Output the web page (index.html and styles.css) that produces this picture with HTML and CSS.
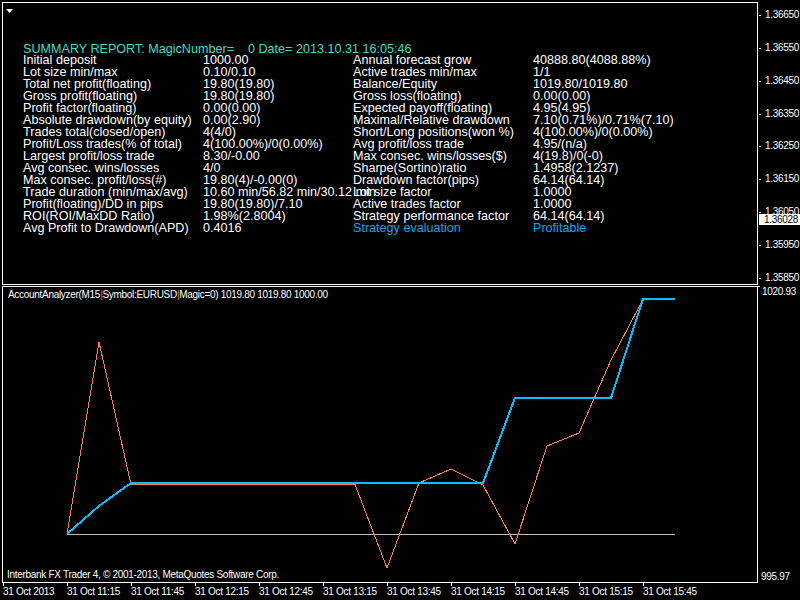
FILE: index.html
```html
<!DOCTYPE html>
<html lang="en">
<head>
  <meta charset="UTF-8" />
  <title>EURUSD,M15 - Account Analyzer</title>
  <link rel="stylesheet" href="styles.css">
</head>
<body>

<div class="terminal">

  <!-- Main chart window -->
  <div class="row row-main">
    <div class="pane pane-main">
      <svg class="menu-arrow" width="7" height="4" viewBox="0 0 7 4"><polygon points="0,0 7,0 3.5,4" fill="#fff"/></svg>
      <div class="report">
        <div class="report-title">SUMMARY REPORT: MagicNumber=    0 Date= 2013.10.31 16:05:46</div>
        <div class="report-grid">
          <span>Initial deposit</span><span>1000.00</span><span>Annual forecast grow</span><span>40888.80(4088.88%)</span>
          <span>Lot size min/max</span><span>0.10/0.10</span><span>Active trades min/max</span><span>1/1</span>
          <span>Total net profit(floating)</span><span>19.80(19.80)</span><span>Balance/Equity</span><span>1019.80/1019.80</span>
          <span>Gross profit(floating)</span><span>19.80(19.80)</span><span>Gross loss(floating)</span><span>0.00(0.00)</span>
          <span>Profit factor(floating)</span><span>0.00(0.00)</span><span>Expected payoff(floating)</span><span>4.95(4.95)</span>
          <span>Absolute drawdown(by equity)</span><span>0.00(2.90)</span><span>Maximal/Relative drawdown</span><span>7.10(0.71%)/0.71%(7.10)</span>
          <span>Trades total(closed/open)</span><span>4(4/0)</span><span>Short/Long positions(won %)</span><span>4(100.00%)/0(0.00%)</span>
          <span>Profit/Loss trades(% of total)</span><span>4(100.00%)/0(0.00%)</span><span>Avg profit/loss trade</span><span>4.95/(n/a)</span>
          <span>Largest profit/loss trade</span><span>8.30/-0.00</span><span>Max consec. wins/losses($)</span><span>4(19.8)/0(-0)</span>
          <span>Avg consec. wins/losses</span><span>4/0</span><span>Sharpe(Sortino)ratio</span><span>1.4958(2.1237)</span>
          <span>Max consec. profit/loss(#)</span><span>19.80(4)/-0.00(0)</span><span>Drawdown factor(pips)</span><span>64.14(64.14)</span>
          <span>Trade duration (min/max/avg)</span><span>10.60 min/56.82 min/30.12 min</span><span>Lot size factor</span><span>1.0000</span>
          <span>Profit(floating)/DD in pips</span><span>19.80(19.80)/7.10</span><span>Active trades factor</span><span>1.0000</span>
          <span>ROI(ROI/MaxDD Ratio)</span><span>1.98%(2.8004)</span><span>Strategy performance factor</span><span>64.14(64.14)</span>
          <span>Avg Profit to Drawdown(APD)</span><span>0.4016</span><span class="eval">Strategy evaluation</span><span class="eval">Profitable</span>
        </div>
      </div>
    </div>

    <div class="price-axis">
      <div class="price">1.36650</div>
      <div class="price">1.36550</div>
      <div class="price">1.36450</div>
      <div class="price">1.36350</div>
      <div class="price">1.36250</div>
      <div class="price">1.36150</div>
      <div class="price">1.36050</div>
      <div class="price">1.35950</div>
      <div class="price">1.35850</div>
      <div class="bid-label">1.36028</div>
    </div>
  </div>

  <!-- Indicator subwindow -->
  <div class="row row-sub">
    <div class="pane pane-sub">
      <svg class="equity-chart" width="754" height="295" viewBox="3 287 754 295">
        <line x1="67" y1="534.5" x2="675" y2="534.5" stroke="#c0c0c0" stroke-width="1"/>
        <polyline fill="none" stroke="#ff7f50" stroke-width="1" shape-rendering="crispEdges"
          points="67,534 99,342 131,484.5 355,484.5 387,568 419,483 451,469 483,485 515,544 547,446 579,433 611,360 643,299.5 675,299.5"/>
        <polyline fill="none" stroke="#00bfff" stroke-width="2" shape-rendering="crispEdges"
          points="67,534 99,506 131,483 483,483 515,398 611,398 643,299 675,299"/>
      </svg>
      <div class="sub-title">AccountAnalyzer(M15<span class="pipe">|</span>Symbol:EURUSD<span class="pipe">|</span>Magic=0) 1019.80 1019.80 1000.00</div>
      <div class="copyright">Interbank FX Trader 4, © 2001-2013, MetaQuotes Software Corp.</div>
    </div>
    <div class="sub-axis">
      <div class="sub-value top">1020.93</div>
      <div class="sub-value">995.97</div>
    </div>
  </div>

  <!-- Time scale -->
  <div class="time-axis">
    <div class="time">31 Oct 2013</div>
    <div class="time">31 Oct 11:15</div>
    <div class="time">31 Oct 11:45</div>
    <div class="time">31 Oct 12:15</div>
    <div class="time">31 Oct 12:45</div>
    <div class="time">31 Oct 13:15</div>
    <div class="time">31 Oct 13:45</div>
    <div class="time">31 Oct 14:15</div>
    <div class="time">31 Oct 14:45</div>
    <div class="time">31 Oct 15:15</div>
    <div class="time">31 Oct 15:45</div>
  </div>

</div>

</body>
</html>
```

FILE: styles.css
```css
html, body {
  margin: 0;
  padding: 0;
  background-color: #000;
  color: #fff;
  font-family: 'Liberation Sans', Arial, sans-serif;
}

.terminal {
  width: 800px;
  height: 600px;
  overflow: hidden;
  padding-top: 2px;
  box-sizing: border-box;
  display: flex;
  flex-direction: column;
}

.row {
  display: flex;
  flex-shrink: 0;
}

.pane {
  width: 756px;
  margin-left: 2px;
  border: 1px solid #fff;
  box-sizing: border-box;
}

/* main chart */
.row-main,
.pane-main {
  height: 283px;
}

.menu-arrow {
  display: block;
  margin: 6px 0 0 3px;
}

.report {
  margin: 30px 0 0 20px;
  font-size: 12.6px;
}

.report-title {
  color: #40dcc4;
  padding-top: 1px;
  line-height: 10px;
  white-space: pre;
}

.report-grid {
  display: grid;
  grid-template-columns: 180px 150px 180px auto;
  line-height: 12px;
  white-space: nowrap;
}

.report-grid .eval {
  color: #0aa6f0;
}

/* right price scale */
.price-axis {
  flex: 1;
  position: relative;
  padding-top: 7px;
  font-size: 10px;
  letter-spacing: -0.3px;
}

.price {
  height: 32.85px;
  line-height: 12px;
  display: flex;
  align-items: flex-start;
}

.price::before,
.sub-value.top::before {
  content: "";
  width: 2px;
  height: 1px;
  margin: 6px 4px 0 1px;
  background-color: #fff;
}

.bid-label {
  position: absolute;
  top: 212px;
  left: 1px;
  right: 0;
  height: 11px;
  line-height: 11px;
  padding-left: 5px;
  background-color: #fff;
  color: #000;
}

/* indicator subwindow */
.row-sub {
  margin-top: 1px;
  height: 297px;
}

.pane-sub {
  height: 297px;
  display: grid;
  font-size: 10px;
  letter-spacing: -0.3px;
}

.pane-sub > * {
  grid-area: 1 / 1;
}

.equity-chart {
  display: block;
}

.sub-title {
  align-self: start;
  margin: 2px 0 0 5px;
  line-height: 12px;
}

.sub-title .pipe {
  color: #d0883c;
}

.copyright {
  align-self: end;
  margin: 0 0 0 4px;
  padding-bottom: 1px;
  line-height: 12px;
}

.sub-axis {
  flex: 1;
  display: flex;
  flex-direction: column;
  justify-content: space-between;
  font-size: 10px;
  letter-spacing: -0.3px;
  line-height: 12px;
}

.sub-value {
  padding-left: 3px;
}

.sub-value.top {
  display: flex;
  padding-left: 0;
}

.sub-value.top::before {
  margin: 0 2px 0 0;
}

/* time scale */
.time-axis {
  display: flex;
  padding-left: 3px;
  font-size: 10px;
  letter-spacing: -0.3px;
  line-height: 12px;
}

.time {
  width: 64px;
  flex-shrink: 0;
  white-space: nowrap;
}

.time::before {
  content: "";
  display: block;
  width: 1px;
  height: 3px;
  background-color: #fff;
}
```
